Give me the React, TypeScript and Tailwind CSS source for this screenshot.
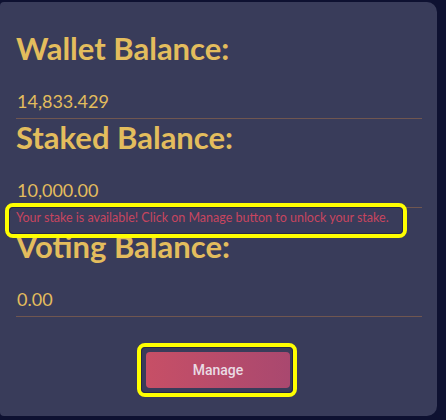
import React from "react"

const rows = [
  { label: "Wallet Balance:", value: "14,833.429" },
  { label: "Staked Balance:", value: "10,000.00" },
  { label: "Voting Balance:", value: "0.00" },
]

export default function App() {
  return (
    <div
      className="w-[446px] h-[420px] bg-[#0e1131] pt-[2px] pr-[9px] pb-[4px]"
      style={{ fontFamily: "Lato, 'Open Sans', sans-serif" }}
    >
      <div className="h-full rounded-r-[10px] rounded-l-[4px] bg-[#393c5a] pl-4 pr-[15px] pt-[28px] flex flex-col">
        {rows.map((row, i) => (
          <div key={row.label}>
            <h2 className="text-[31px] leading-[36px] font-bold text-[#e3bd5d]">{row.label}</h2>
            <div className="mt-[24px] text-[18px] leading-[22px] font-normal text-[#e3bd5d] pl-[1px]">
              {row.value}
            </div>
            <div className="mt-[6px] h-px bg-[#7e5d4d] opacity-80" />
            {i === 1 && (
              <div className="relative mt-[2px] mb-[2px]">
                <p className="text-[12.5px] leading-[16px] text-[#c7455f] whitespace-nowrap">
                  Your stake is available! Click on Manage button to unlock your stake.
                </p>
                {/* annotation ring */}
                <div className="absolute left-[-11px] top-[-7px] w-[402px] h-[35px] rounded-[8px] border-4 border-[#ffff00] pointer-events-none">
                  <div className="w-full h-full rounded-[4px] border border-[#262944]" />
                </div>
              </div>
            )}
          </div>
        ))}
        <div className="flex justify-center mt-[35px] pr-[2px]">
          <div className="relative">
            <button
              className="w-[144px] h-[36px] rounded-[4px] bg-gradient-to-r from-[#c74f66] to-[#a9486f] text-[#eadbe4] text-[14px] font-medium"
              style={{ fontFamily: "Roboto, sans-serif" }}
            >
              Manage
            </button>
            <div className="absolute -left-[9px] -top-[9px] w-[160px] h-[54px] rounded-[8px] border-4 border-[#ffff00] pointer-events-none">
              <div className="w-full h-full rounded-[4px] border border-[#262944]" />
            </div>
          </div>
        </div>
      </div>
    </div>
  )
}
